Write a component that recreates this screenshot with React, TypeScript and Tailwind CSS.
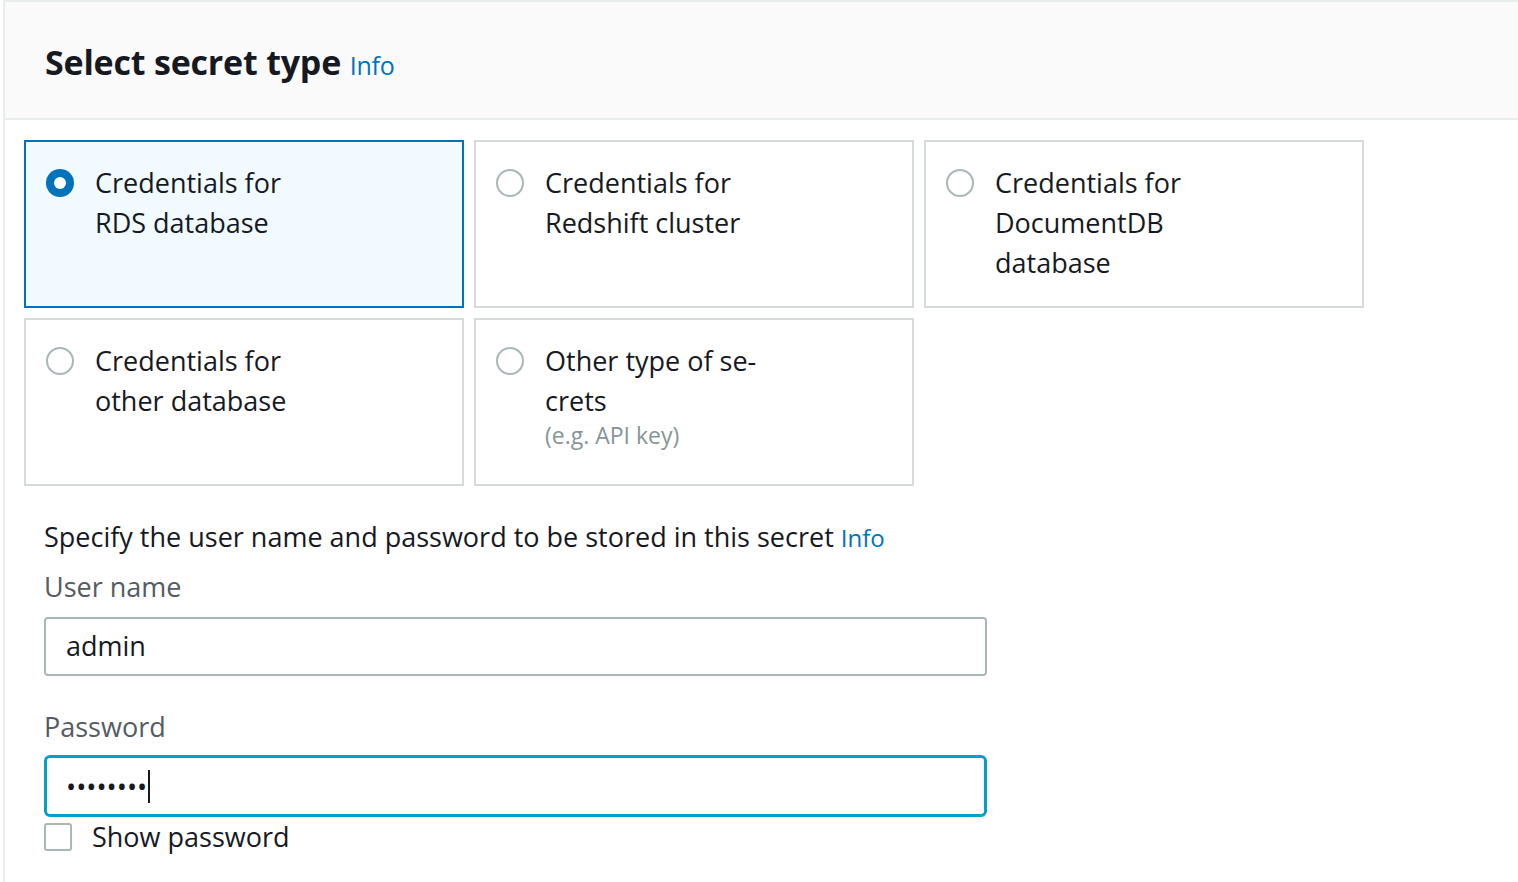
import { useState } from 'react';

type SecretOption = {
  id: string;
  lines: string[];
  hint?: string;
};

const options: SecretOption[] = [
  { id: 'rds', lines: ['Credentials for', 'RDS database'] },
  { id: 'redshift', lines: ['Credentials for', 'Redshift cluster'] },
  { id: 'docdb', lines: ['Credentials for', 'DocumentDB', 'database'] },
  { id: 'other-db', lines: ['Credentials for', 'other database'] },
  { id: 'other', lines: ['Other type of se-', 'crets'], hint: '(e.g. API key)' },
];

function Radio({ checked }: { checked: boolean }) {
  if (checked) {
    return (
      <span className="mt-[6px] flex size-[28px] shrink-0 items-center justify-center rounded-full bg-[#0073bb]">
        <span className="size-[12px] rounded-full bg-white" />
      </span>
    );
  }
  return <span className="mt-[6px] size-[28px] shrink-0 rounded-full border-2 border-[#aab7b8] bg-white" />;
}

export default function App() {
  const [selected, setSelected] = useState('rds');
  const [showPassword, setShowPassword] = useState(false);

  return (
    <div className="min-h-screen bg-white pl-[3px] text-[#16191f] font-['Open_Sans',_'Noto_Sans',_sans-serif]">
      <div className="min-h-screen border-l-2 border-t-2 border-[#eaeded]">
        <div className="flex h-[118px] items-center border-b-2 border-[#eaeded] bg-[#fafafa] pl-[40px] pt-[3px]">
          <h2 className="text-[34px] font-bold leading-[44px] tracking-[-0.2px]">
            Select secret type{' '}
            <a className="text-[25px] font-normal leading-none text-[#0073bb]" href="#">
              Info
            </a>
          </h2>
        </div>

        <div className="grid grid-cols-[440px_440px_440px] gap-[10px] pl-[19px] pt-[20px]">
          {options.map((opt) => {
            const isSel = opt.id === selected;
            return (
              <button
                key={opt.id}
                onClick={() => setSelected(opt.id)}
                className={`flex h-[168px] items-start gap-[21px] border-2 px-[20px] pt-[21px] text-left ${
                  isSel ? 'border-[#0073bb] bg-[#f1faff]' : 'border-[#d5dbdb] bg-white'
                }`}
              >
                <Radio checked={isSel} />
                <div className="text-[27px] leading-[40px]">
                  {opt.lines.map((l) => (
                    <div key={l}>{l}</div>
                  ))}
                  {opt.hint && <div className="text-[23px] leading-[28px] text-[#879596]">{opt.hint}</div>}
                </div>
              </button>
            );
          })}
        </div>

        <div className="w-[982px] pl-[39px] pt-[31px]">
          <p className="text-[27px] leading-[40px]">
            Specify the user name and password to be stored in this secret{' '}
            <a className="text-[24px] leading-none text-[#0073bb]" href="#">
              Info
            </a>
          </p>
          <label className="mt-[10px] block text-[27px] leading-[40px] text-[#545b64]">User name</label>
          <div className="mt-[10px] flex h-[59px] items-center rounded-[4px] border-2 border-[#aab7b8] px-[20px] text-[27px]">
            admin
          </div>
          <label className="mt-[31px] block text-[27px] leading-[40px] text-[#545b64]">Password</label>
          <div className="mt-[8px] flex h-[62px] items-center rounded-[6px] border-[3px] border-[#00a1c9] px-[19px]">
            <span className="text-[27px] leading-none">{showPassword ? 'password' : '••••••••'}</span>
            <span className="ml-[1px] h-[33px] w-[2px] bg-[#16191f]" />
          </div>
          <label className="mt-[5px] flex items-center gap-[20px]">
            <input
              type="checkbox"
              checked={showPassword}
              onChange={(e) => setShowPassword(e.target.checked)}
              className="size-[28px] appearance-none rounded-[3px] border-2 border-[#aab7b8] bg-white"
            />
            <span className="text-[27px] leading-[30px]">Show password</span>
          </label>
        </div>
      </div>
    </div>
  );
}
